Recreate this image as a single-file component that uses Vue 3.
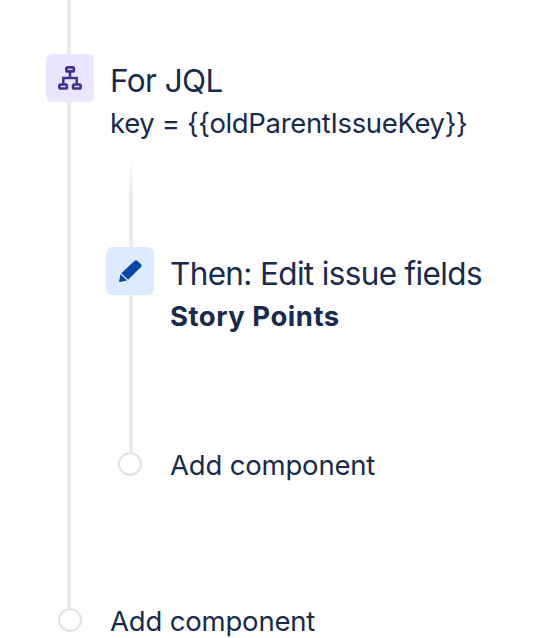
<template>
  <div class="rule-chain">
    <div class="step">
      <div class="rail rail--root">
        <span class="rail__line rail__line--lead"></span>
        <span class="step__icon step__icon--branch">
          <svg viewBox="0 0 24 24" fill="none" stroke="currentColor" stroke-width="2.7">
            <rect x="8.35" y="1.45" width="7.5" height="4" rx="1.2" />
            <rect x="1.4" y="18.5" width="7.5" height="4" rx="1.2" />
            <rect x="15.1" y="18.5" width="7.5" height="4" rx="1.2" />
            <path d="M12 5.5v6.5M5.3 18.5v-6.5h13.4v6.5" stroke-width="2.5" />
          </svg>
        </span>
        <span class="rail__line"></span>
      </div>

      <div class="step__body step__body--root">
        <div class="step__title step__title--branch">For JQL</div>
        <div class="step__detail step__detail--query">{{ query }}</div>

        <!-- Branch -->
        <div class="branch">
          <div class="step">
            <div class="rail rail--nested">
              <span class="rail__line rail__line--fade"></span>
              <span class="step__icon step__icon--action">
                <svg viewBox="0 0 24 24" fill="currentColor">
                  <path d="M3.4 14.3 16.3 1.9Q18 .4 19.7 1.9L22.8 4.9Q24.4 6.6 22.8 8.2L10 20.7Z" />
                  <path d="M2.6 15.3 9 21.6 2.2 23.1Q1 23.2 1.1 22Z" />
                </svg>
              </span>
              <span class="rail__line"></span>
            </div>
            <div class="step__body step__body--nested">
              <div class="step__title step__title--action">Then: Edit issue fields</div>
              <div class="step__detail step__detail--strong">Story Points</div>
            </div>
          </div>

          <div class="add">
            <span class="add__dot"></span>
            <span class="add__label">Add component</span>
          </div>
        </div>
      </div>
    </div>

    <div class="add">
      <span class="add__dot"></span>
      <span class="add__label">Add component</span>
    </div>
  </div>
</template>

<script setup>
const query = 'key = {{oldParentIssueKey}}'
</script>

<style>
body {
  margin: 0;
  background: #fff;
  overflow: hidden;
}
</style>

<style scoped>
.rule-chain {
  box-sizing: border-box;
  height: 638px;
  padding-left: 46px;
  overflow: hidden;
  font-family: Inter, 'Liberation Sans', sans-serif;
  color: #172b4d;
  white-space: nowrap;
}

.step {
  display: flex;
}

/* Rail */
.rail {
  flex: none;
  display: flex;
  flex-direction: column;
  width: 48px;
}

.rail__line {
  flex: 1;
  width: 4px;
  background: #ebecf0;
}

.rail--root .rail__line {
  margin-left: 21px;
}

.rail--nested .rail__line {
  margin-left: 23px;
}

.rail__line--lead {
  flex: none;
  height: 54px;
}

.rail__line--fade {
  flex: none;
  height: 89px;
  background: linear-gradient(#fff, #ebecf0 40px);
}

/* Step */
.step__icon {
  flex: none;
  display: flex;
  align-items: center;
  justify-content: center;
  width: 48px;
  height: 48px;
  border-radius: 6px;
}

.step__icon svg {
  width: 24px;
  height: 24px;
}

.step__icon--branch {
  background: #eae6ff;
  color: #403294;
}

.step__icon--action {
  background: #deebff;
  color: #0747a6;
}

.step__body {
  margin-left: 16px;
}

.step__body--root {
  height: 608px;
}

.step__body--nested {
  height: 294px;
}

.step__title {
  font-size: 31.5px;
  line-height: 40px;
}

.step__title--branch {
  padding-top: 61px;
  letter-spacing: -0.58px;
}

.step__title--action {
  padding-top: 96px;
  letter-spacing: -0.65px;
}

.step__detail {
  margin-top: 4px;
  font-size: 27.5px;
  line-height: 36px;
}

.step__detail--query {
  letter-spacing: -0.35px;
}

.step__detail--strong {
  font-weight: 700;
  letter-spacing: 0.5px;
}

/* Branch */
.branch {
  margin-top: 17px;
  margin-left: -4px;
}

/* Add component */
.add {
  display: flex;
  height: 24px;
  padding-left: 12px;
}

.add__dot {
  flex: none;
  box-sizing: border-box;
  width: 24px;
  height: 24px;
  border: 2px solid #dfe1e6;
  border-radius: 50%;
  background: #fff;
}

.add__label {
  margin-left: 28px;
  font-size: 27.5px;
  line-height: 26px;
  letter-spacing: -0.18px;
}
</style>
